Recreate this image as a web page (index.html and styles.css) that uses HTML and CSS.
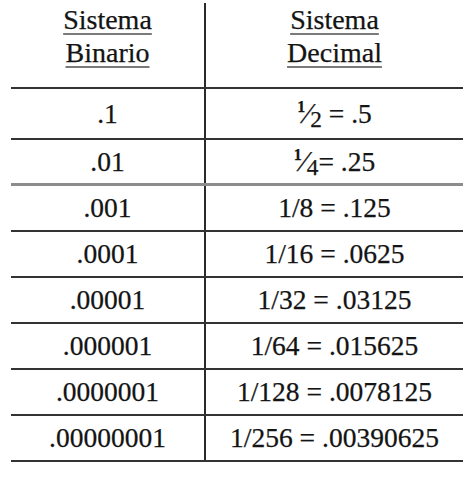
FILE: index.html
```html
<!DOCTYPE html>
<html lang="es">
<head>
<meta charset="utf-8">
<title>Sistema Binario / Sistema Decimal</title>
<link rel="stylesheet" href="styles.css">
</head>
<body>
<div class="table">
  <div class="row head">
    <div class="cell left"><span class="u">Sistema</span><br><span class="u">Binario</span></div>
    <div class="cell right"><span class="u">Sistema</span><br><span class="u">Decimal</span></div>
  </div>
  <div class="row first">
    <div class="cell left">.1</div>
    <div class="cell right"><span class="frac"><span class="num">1</span><span class="sl">⁄</span><span class="den">2</span></span> = .5</div>
  </div>
  <div class="row grey">
    <div class="cell left">.01</div>
    <div class="cell right"><span class="frac"><span class="num">1</span><span class="sl">⁄</span><span class="den">4</span></span>= .25</div>
  </div>
  <div class="row">
    <div class="cell left">.001</div>
    <div class="cell right">1/8 = .125</div>
  </div>
  <div class="row">
    <div class="cell left">.0001</div>
    <div class="cell right">1/16 = .0625</div>
  </div>
  <div class="row">
    <div class="cell left">.00001</div>
    <div class="cell right">1/32 = .03125</div>
  </div>
  <div class="row">
    <div class="cell left">.000001</div>
    <div class="cell right">1/64 = .015625</div>
  </div>
  <div class="row">
    <div class="cell left">.0000001</div>
    <div class="cell right">1/128 = .0078125</div>
  </div>
  <div class="row">
    <div class="cell left">.00000001</div>
    <div class="cell right">1/256 = .00390625</div>
  </div>
</div>
</body>
</html>
```

FILE: styles.css
```css
html, body {
  margin: 0;
  padding: 0;
  background: #ffffff;
}
body {
  font-family: "Liberation Serif", "Times New Roman", serif;
  color: #141414;
  -webkit-text-stroke: 0.25px #141414;
}
.table {
  margin-left: 11px;
  width: 452px;
  padding-top: 4px;
}
.row {
  display: grid;
  grid-template-columns: 193px 259px;
  height: 46px;
  border-bottom: 2px solid #333333;
  box-sizing: border-box;
  font-size: 27.5px;
}
.cell {
  text-align: center;
  line-height: 44px;
  white-space: nowrap;
}
.cell.right {
  border-left: 2px solid #2a2a2a;
}
.row.head {
  height: 85px;
  font-size: 28px;
}
.row.head .cell {
  line-height: 33px;
  margin-top: -1px;
}
.u {
  text-decoration: underline;
  text-decoration-color: #7a7a7a;
  text-decoration-thickness: 2px;
  text-underline-offset: 4px;
}
.row.first {
  height: 51px;
}
.row.first .cell {
  line-height: 49px;
}
.row.grey {
  border-bottom: 3px solid #8c8c8c;
}
.row.grey .cell {
  line-height: 43px;
}
.frac {
  line-height: 0;
}
.frac .num {
  font-size: 0.58em;
  font-weight: bold;
  vertical-align: 0.72em;
  line-height: 0;
}
.frac .sl {
  font-size: 1.1em;
  line-height: 0;
}
.frac .den {
  font-size: 0.85em;
  vertical-align: -0.15em;
  line-height: 0;
}
```
